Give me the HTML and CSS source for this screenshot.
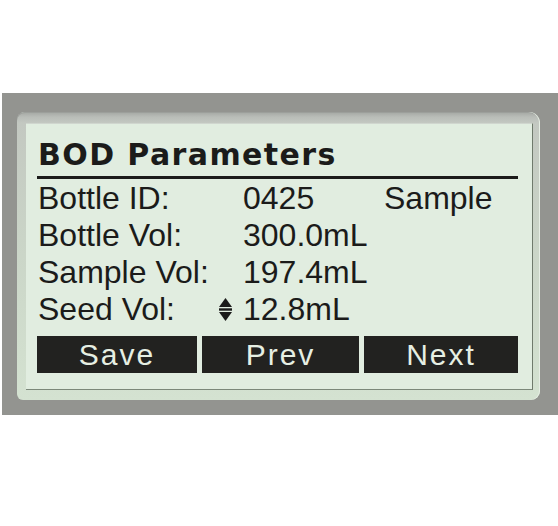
FILE: index.html
```html
<!DOCTYPE html>
<html>
<head>
<meta charset="utf-8">
<link rel="stylesheet" href="styles.css">
</head>
<body>
<div class="device">
  <div class="bezel">
    <div class="screen">
      <div class="title">BOD Parameters</div>
      <div class="rule"></div>
      <div class="rows">
        <div class="label">Bottle ID:</div><div class="ind"></div><div class="value">0425</div><div class="extra">Sample</div>
        <div class="label">Bottle Vol:</div><div class="ind"></div><div class="value">300.0mL</div><div class="extra"></div>
        <div class="label">Sample Vol:</div><div class="ind"></div><div class="value">197.4mL</div><div class="extra"></div>
        <div class="label">Seed Vol:</div>
        <div class="ind"><svg class="arrow" width="13" height="23" viewBox="0 0 13 23"><polygon points="6.5,0 13,9 0,9" fill="#1b1b1a"/><rect x="0" y="10.3" width="13" height="2.4" fill="#1b1b1a"/><polygon points="0,14 13,14 6.5,23" fill="#1b1b1a"/></svg></div>
        <div class="value">12.8mL</div><div class="extra"></div>
      </div>
      <div class="buttons">
        <div class="btn">Save</div>
        <div class="btn">Prev</div>
        <div class="btn">Next</div>
      </div>
    </div>
  </div>
</div>
</body>
</html>
```
FILE: styles.css
```css
html, body {
  margin: 0;
  padding: 0;
  background: #ffffff;
}
body {
  width: 558px;
  height: 526px;
  overflow: hidden;
}
.device {
  margin-top: 93px;
  margin-left: 2px;
  height: 322px;
  background: #939490;
  padding-top: 19px;
  padding-left: 15px;
  box-sizing: border-box;
}
.bezel {
  width: 523px;
  height: 288px;
  box-sizing: border-box;
  padding: 11px 7px 10px 9px;
  border-radius: 8px 11px 9px 6px;
  background: linear-gradient(to bottom, #a4a7a3 0, #b9bdb8 5px, #c3c8c1 11px, #cbd6c8 50%, #d4e2d1 100%);
  box-shadow: inset -1px 0 0 #e6eee4, inset 0 1px 0 #9c9f9b;
}
.screen {
  height: 100%;
  box-sizing: border-box;
  border-right: 1px solid #6f7a6c;
  border-bottom: 1px solid #7c887a;
  border-top: 1px solid #d0d6cf;
  background: #e1ede0;
  padding: 13px 0 0 12px;
  color: #1b1b1a;
  font-family: "Liberation Sans", Arial, sans-serif;
}
.title {
  font-family: "DejaVu Sans", sans-serif;
  font-weight: bold;
  font-size: 30px;
  line-height: 36px;
  height: 36px;
  letter-spacing: 1.4px;
}
.rule {
  margin-top: 3px;
  margin-left: -1px;
  width: 481px;
  height: 2.5px;
  background: #1b1b1a;
}
.rows {
  margin-top: 1px;
  display: grid;
  grid-template-columns: 181px 24px 141px auto;
  grid-auto-rows: 37px;
  font-size: 32px;
  line-height: 37px;
}
.ind {
  display: flex;
  align-items: flex-start;
}
.arrow {
  margin-top: 7px;
}
.buttons {
  margin-top: 8px;
  margin-left: -1px;
  display: grid;
  grid-template-columns: 160px 157px 154px;
  column-gap: 5px;
}
.btn {
  background: #222220;
  color: #e6efe3;
  height: 37px;
  line-height: 37px;
  font-size: 30px;
  letter-spacing: 2px;
  text-align: center;
}
```
